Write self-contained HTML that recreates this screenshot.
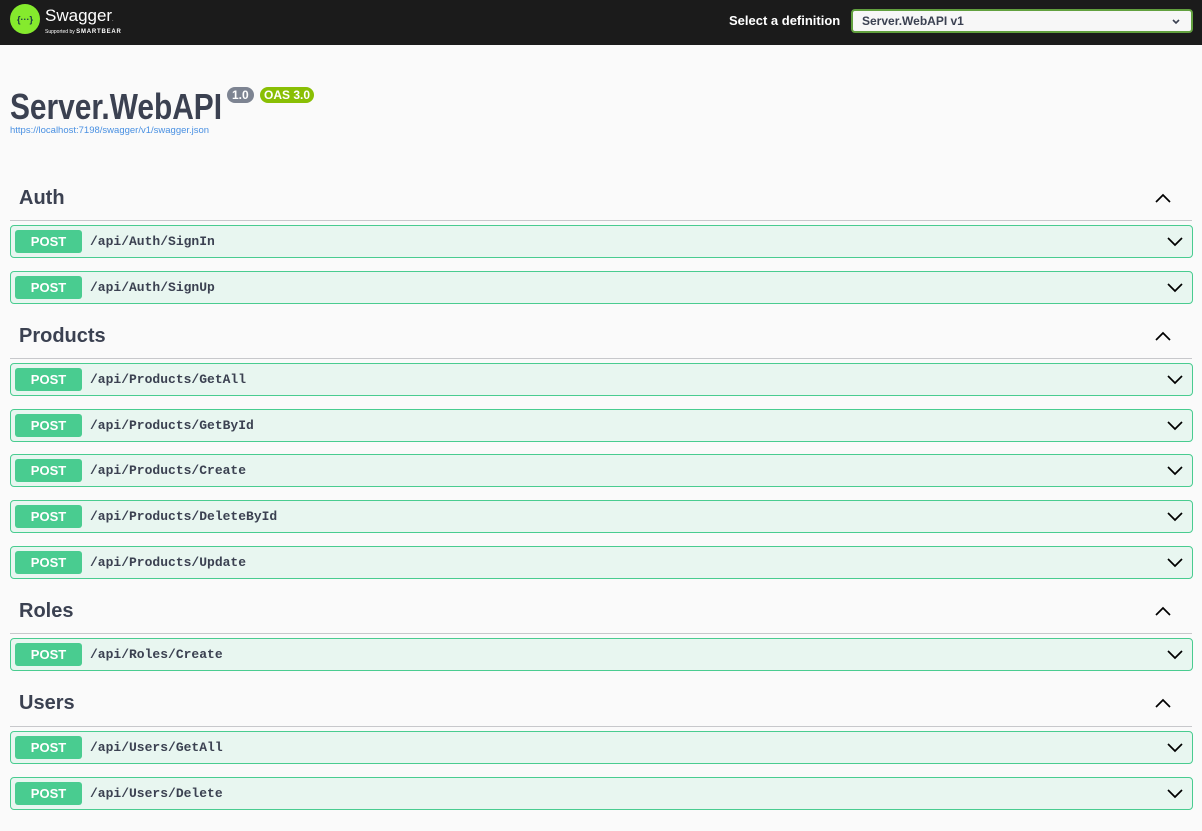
<!DOCTYPE html>
<html><head><meta charset="utf-8"><style>
*{margin:0;padding:0;box-sizing:border-box}
body{width:1202px;height:831px;background:#fafafa;font-family:"Liberation Sans",sans-serif;position:relative;overflow:hidden;color:#3b4151}
.top{position:absolute;left:0;top:0;width:1202px;height:45px;background:#1b1b1b}
.a{position:absolute}
.h{position:absolute;left:19px;font-size:20px;font-weight:bold;color:#3b4151}
.ln{position:absolute;left:10px;width:1182px;height:1px;background:#c7c8cb}
.up{position:absolute;left:1155px}
.row{position:absolute;left:10px;width:1183px;height:33px;border:1px solid #49cc90;border-radius:4px;background:#e8f6f0}
.b{position:absolute;left:4px;top:4px;width:67px;height:23px;background:#49cc90;border-radius:3px;color:#fff;font-weight:bold;font-size:13px;text-align:center;line-height:23px}
.p{position:absolute;left:79px;top:8px;font-family:"Liberation Mono",monospace;font-size:13px;font-weight:bold;color:#3b4151}
.dn{position:absolute;left:1156px;top:9px}
</style></head><body>
<div class="top">
<svg class="a" style="left:10px;top:4px" width="30" height="30" viewBox="0 0 30 30"><circle cx="15" cy="15" r="15" fill="#85ea2d"/><text x="15" y="18.5" font-size="9" font-weight="bold" fill="#173647" text-anchor="middle" font-family="Liberation Sans">{···}</text></svg>
<div class="a" style="left:45px;top:6px;color:#fff;font-size:17px">Swagger<span style="font-size:5px">.</span></div>
<div class="a" style="left:45px;top:29px;color:#fff;font-size:5px;white-space:nowrap">Supported by <b style="font-size:6px;letter-spacing:.8px">SMARTBEAR</b></div>
<div class="a" style="left:729px;top:13px;color:#fff;font-weight:bold;font-size:13px">Select a definition</div>
<div class="a" style="left:851px;top:9px;width:342px;height:24px;background:#f7f7f7;border:2px solid #62a03f;border-radius:4px;font-size:12px;font-weight:bold;padding:3px 0 0 9px;color:#3b4151">Server.WebAPI v1
<svg class="a" style="left:318px;top:7px" width="10" height="8" viewBox="0 0 10 8"><path d="M2 2l3 3 3-3" stroke="#3b4151" stroke-width="1.6" fill="none"/></svg></div>
</div>
<div class="a" style="left:10px;top:86px;font-size:36px;font-weight:bold;color:#3b4151;transform:scaleX(0.83);transform-origin:0 0;white-space:nowrap">Server.WebAPI</div>
<div class="a" style="left:227px;top:87px;height:16px;padding:0 5px;background:#7d8492;border-radius:8px;color:#fff;font-size:12px;font-weight:bold;line-height:16px">1.0</div>
<div class="a" style="left:260px;top:87px;height:16px;padding:0 4px;background:#89bf04;border-radius:8px;color:#fff;font-size:12px;font-weight:bold;line-height:16px">OAS 3.0</div>
<div class="a" style="left:10px;top:125px;font-size:9.5px;color:#4990e2">https://localhost:7198/swagger/v1/swagger.json</div>

<div class="h" style="top:187px">Auth</div><div class="ln" style="top:220px"></div>
<svg class="up" style="top:192px" width="16" height="12"><path d="M1 10l7-7 7 7" stroke="#000" stroke-width="1.7" fill="none"/></svg>
<div class="row" style="top:225px"><div class="b">POST</div><div class="p">/api/Auth/SignIn</div><svg class="dn" width="16" height="12"><path d="M1 3l7 7 7-7" stroke="#000" stroke-width="1.7" fill="none"/></svg></div>
<div class="row" style="top:271px"><div class="b">POST</div><div class="p">/api/Auth/SignUp</div><svg class="dn" width="16" height="12"><path d="M1 3l7 7 7-7" stroke="#000" stroke-width="1.7" fill="none"/></svg></div>

<div class="h" style="top:325px">Products</div><div class="ln" style="top:358px"></div>
<svg class="up" style="top:330px" width="16" height="12"><path d="M1 10l7-7 7 7" stroke="#000" stroke-width="1.7" fill="none"/></svg>
<div class="row" style="top:363px"><div class="b">POST</div><div class="p">/api/Products/GetAll</div><svg class="dn" width="16" height="12"><path d="M1 3l7 7 7-7" stroke="#000" stroke-width="1.7" fill="none"/></svg></div>
<div class="row" style="top:409px"><div class="b">POST</div><div class="p">/api/Products/GetById</div><svg class="dn" width="16" height="12"><path d="M1 3l7 7 7-7" stroke="#000" stroke-width="1.7" fill="none"/></svg></div>
<div class="row" style="top:454px"><div class="b">POST</div><div class="p">/api/Products/Create</div><svg class="dn" width="16" height="12"><path d="M1 3l7 7 7-7" stroke="#000" stroke-width="1.7" fill="none"/></svg></div>
<div class="row" style="top:500px"><div class="b">POST</div><div class="p">/api/Products/DeleteById</div><svg class="dn" width="16" height="12"><path d="M1 3l7 7 7-7" stroke="#000" stroke-width="1.7" fill="none"/></svg></div>
<div class="row" style="top:546px"><div class="b">POST</div><div class="p">/api/Products/Update</div><svg class="dn" width="16" height="12"><path d="M1 3l7 7 7-7" stroke="#000" stroke-width="1.7" fill="none"/></svg></div>

<div class="h" style="top:600px">Roles</div><div class="ln" style="top:633px"></div>
<svg class="up" style="top:605px" width="16" height="12"><path d="M1 10l7-7 7 7" stroke="#000" stroke-width="1.7" fill="none"/></svg>
<div class="row" style="top:638px"><div class="b">POST</div><div class="p">/api/Roles/Create</div><svg class="dn" width="16" height="12"><path d="M1 3l7 7 7-7" stroke="#000" stroke-width="1.7" fill="none"/></svg></div>

<div class="h" style="top:692px">Users</div><div class="ln" style="top:726px"></div>
<svg class="up" style="top:697px" width="16" height="12"><path d="M1 10l7-7 7 7" stroke="#000" stroke-width="1.7" fill="none"/></svg>
<div class="row" style="top:731px"><div class="b">POST</div><div class="p">/api/Users/GetAll</div><svg class="dn" width="16" height="12"><path d="M1 3l7 7 7-7" stroke="#000" stroke-width="1.7" fill="none"/></svg></div>
<div class="row" style="top:777px"><div class="b">POST</div><div class="p">/api/Users/Delete</div><svg class="dn" width="16" height="12"><path d="M1 3l7 7 7-7" stroke="#000" stroke-width="1.7" fill="none"/></svg></div>
</body></html>
